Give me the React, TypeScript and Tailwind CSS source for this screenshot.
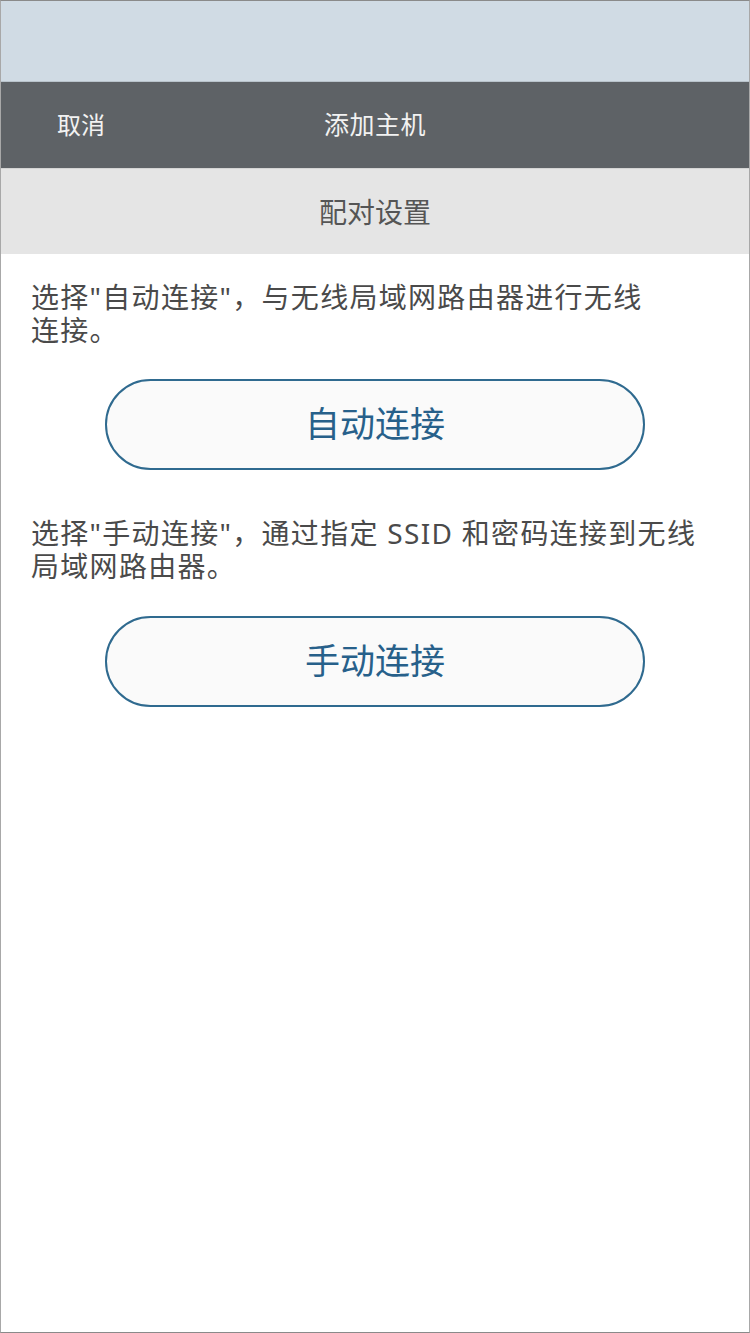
export default function App() {
  const font = { fontFamily: '"Noto Sans", "Noto Sans CJK SC", sans-serif' };
  return (
    <div
      className="w-[750px] h-[1333px] flex flex-col bg-white border border-t-[#8a8a8a] border-b-[#8a8a8a] border-x-[#a8a8a8] overflow-hidden"
      style={font}
    >
      {/* status bar area */}
      <div className="h-[81px] bg-[#d0dbe4] border-b border-[#b9c3cb] shrink-0" />

      {/* nav bar */}
      <div className="h-[86px] bg-[#5e6266] grid grid-cols-[1fr_auto_1fr] items-center shrink-0">
        <div className="pl-[56px] text-[24px] text-[#f2f2f2]">取消</div>
        <div className="text-[25px] tracking-[0.5px] text-[#f2f2f2]">添加主机</div>
        <div />
      </div>

      {/* section header */}
      <div className="h-[86px] bg-[#e5e5e5] border-t border-[#d4d4d4] flex items-center justify-center shrink-0">
        <span className="text-[28px] text-[#555555]">配对设置</span>
      </div>

      <main className="px-[30px] pt-[27px]">
        <div className="text-[28px] leading-[33px] tracking-[1.3px] text-[#4a4a4a] whitespace-nowrap">
          <div>选择"自动连接"，与无线局域网路由器进行无线</div>
          <div>连接。</div>
        </div>
        <button className="mt-[32px] mx-auto flex items-center justify-center w-[540px] h-[91px] rounded-full border-2 border-[#2f6a8f] bg-[#fafafa] text-[35px] text-[#27608a]">
          自动连接
        </button>

        <div className="mt-[47px] text-[28px] leading-[33px] tracking-[1.3px] text-[#4a4a4a] whitespace-nowrap">
          <div>选择"手动连接"，通过指定 SSID 和密码连接到无线</div>
          <div>局域网路由器。</div>
        </div>
        <button className="mt-[33px] mx-auto flex items-center justify-center w-[540px] h-[91px] rounded-full border-2 border-[#2f6a8f] bg-[#fafafa] text-[35px] text-[#27608a]">
          手动连接
        </button>
      </main>
    </div>
  );
}
